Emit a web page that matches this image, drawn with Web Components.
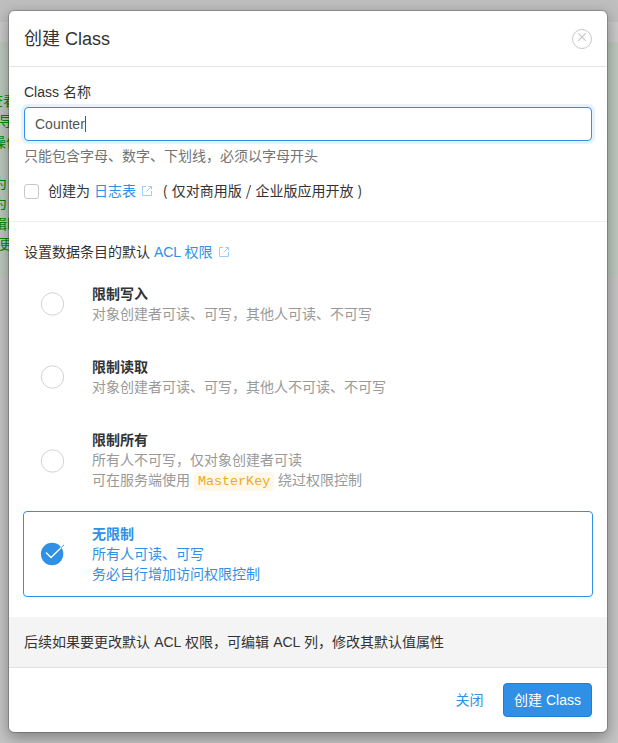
<!DOCTYPE html>
<html lang="zh-CN">
<head>
<meta charset="utf-8">
<title>创建 Class</title>
<style>
html,body{margin:0;height:100%;overflow:hidden}
body{font:14px/20px "Liberation Sans","Noto Sans CJK SC",sans-serif;color:#333;background:#c8c8c8}
</style>
</head>
<body>
<app-root></app-root>
<script>
function define(name, html, init) {
  const t = document.createElement('template');
  t.innerHTML = html;
  customElements.define(name, class extends HTMLElement {
    constructor() {
      super();
      this.attachShadow({ mode: 'open' }).append(t.content.cloneNode(true));
      if (init) init(this);
    }
  });
}

define('page-backdrop', `<style>
:host{display:flex;flex-direction:column;height:743px;width:618px;overflow:hidden;background:#c6c6c6}
.bar{height:22px;background:#bfbfbf}
.sub{height:20px;background:#cbcbcb}
.doc{height:234px;background:#bfc9bf;color:#008a00;line-height:20.5px;white-space:nowrap;padding-top:48.5px;box-sizing:border-box}
.doc div{height:20.5px}
.doc span{display:block}
</style>
<div class="bar"></div><div class="sub"></div>
<div class="doc"><div><span style="margin-left:-11px">查看</span></div><div><span style="margin-left:-1px">导</span></div><div><span style="margin-left:-8px">操作</span></div><div></div><div><span style="margin-left:-7px">为</span></div><div><span style="margin-left:-7px">为</span></div><div><span style="margin-left:-7px">辑时</span></div><div><span style="margin-left:-1px">更</span></div></div>`);

define('modal-dialog', `<style>
:host{position:relative;display:flex;flex-direction:column;box-sizing:border-box;width:600px;height:723px;background:#fff;background-clip:padding-box;border:1px solid rgba(0,0,0,.2);border-radius:6px;box-shadow:0 5px 15px rgba(0,0,0,.35);overflow:hidden}
header{display:flex;align-items:center;justify-content:space-between;height:55px;padding:0 15px;border-bottom:1px solid #e5e5e5;font-size:18px}
footer{margin-top:auto;display:flex;justify-content:flex-end;align-items:center;height:64px;padding:0 15px;border-top:1px solid #e2e2e2}
</style><header><slot name="title"></slot><close-button></close-button></header><slot></slot><footer><slot name="actions"></slot></footer>`);

define('close-button', `<style>:host{display:block;width:20px;height:20px}svg{display:block}</style>
<svg width="20" height="20" fill="none" stroke="#c8c8c8"><circle cx="10" cy="10" r="9.5"/><path d="M6.2 4.2l7.6 7.6M13.8 4.2l-7.6 7.6" stroke-width="1.2"/></svg>`);

define('text-field', `<style>
:host{display:block}
label{display:block;height:20px;margin-bottom:5px}
.box{box-sizing:border-box;height:34px;border:1px solid #2f90e6;border-radius:4px;box-shadow:0 0 0 3px #e6f2fc;padding:6px 10px;display:flex;align-items:center;color:#555}
.caret{width:1px;height:16px;background:#555}
.help{color:#737373;margin-top:5px}
</style><label><slot name="label"></slot></label><div class="box"><slot></slot><i class="caret"></i></div><div class="help"><slot name="help"></slot></div>`);

define('doc-link', `<style>
:host{color:#2f90e6}
svg{margin-left:5px;vertical-align:-1px}
</style><slot></slot><svg width="12" height="12" fill="none" stroke="#9dccf5"><path d="M5 1.5H1.5V10.5H10.5V6M7.5 1.5H10.5V4.5M10.5 1.5L5.5 6.5"/></svg>`);

define('check-row', `<style>
:host{display:flex;align-items:center;height:20px}
.b{box-sizing:border-box;width:15px;height:15px;border:1px solid #c8c8c8;border-radius:3px;margin-right:9px}
</style><span class="b"></span><span><slot></slot></span>`);

define('code-tag', `<style>
:host{display:inline-block;font:13.4px/19px "Liberation Mono",monospace;color:#f5a623;background:#fff8e8;border-radius:4px;padding:0 4px}
</style><slot></slot>`);

define('acl-option', `<style>
:host{display:flex;align-items:center;box-sizing:border-box;border:1px solid transparent;border-radius:4px;padding:12px 16px;height:66px;color:#999}
:host([size=tall]){height:87px}
:host([selected]){height:86px;border-color:#2f90e6;color:#2f90e6}
svg{flex:none;margin-right:27px}
b{display:block;color:#333}
:host([selected]) b{color:inherit}
.on{display:none}
:host([selected]) .on{display:inline}
:host([selected]) .off{display:none}
</style><svg width="25" height="24"><circle class="off" cx="12.5" cy="12" r="11.2" fill="none" stroke="#d2d2d2"/><g class="on"><circle cx="12.1" cy="12" r="11.2" fill="#2f90e6"/><path d="M6 10.5L11 15.5L23.6 3.2" fill="none" stroke="#fff" stroke-width="1.3"/><path d="M21.2 5.5L24 2.8" stroke="#2f90e6"/></g></svg>
<div><b><slot name="name"></slot></b><slot></slot></div>`);

define('ui-button', `<style>
:host{box-sizing:border-box;display:block;height:34px;padding:6px 10px;border:1px solid transparent;border-radius:4px;color:#2f90e6}
:host([primary]){background:#2f90e6;border-color:#1b80da;color:#fff;margin-left:8.5px}
</style><slot></slot>`);

define('app-root', `<style>
:host{display:grid;width:618px;height:743px}
page-backdrop,modal-dialog{grid-area:1/1}
modal-dialog{margin:10px 0 0 8px}
.form{padding:15px 15px 20px;border-bottom:1px solid #eee}
check-row{margin-top:15px}
.acl{padding:20px 14px 20px}
.lead{padding-left:1px;margin-bottom:9px}
.list{display:flex;flex-direction:column;gap:7px}
.note{background:#f4f4f4;padding:15px;height:20px;word-spacing:.25px}
.paren{font-family:"Noto Sans CJK SC",sans-serif;line-height:0;margin-left:6px;word-spacing:1px}
</style>
<page-backdrop></page-backdrop>
<modal-dialog>
<span slot="title">创建 Class</span>
<div class="form">
<text-field><span slot="label">Class 名称</span>Counter<span slot="help">只能包含字母、数字、下划线，必须以字母开头</span></text-field>
<check-row>创建为 <doc-link>日志表</doc-link> <span class="paren">( 仅对商用版 / 企业版应用开放 )</span></check-row>
</div>
<div class="acl"><div class="lead">设置数据条目的默认 <doc-link>ACL 权限</doc-link></div>
<div class="list">
<acl-option><span slot="name">限制写入</span>对象创建者可读、可写，其他人可读、不可写</acl-option>
<acl-option><span slot="name">限制读取</span>对象创建者可读、可写，其他人不可读、不可写</acl-option>
<acl-option size="tall"><span slot="name">限制所有</span>所有人不可写，仅对象创建者可读<br>可在服务端使用 <code-tag>MasterKey</code-tag> 绕过权限控制</acl-option>
<acl-option selected><span slot="name">无限制</span>所有人可读、可写<br>务必自行增加访问权限控制</acl-option>
</div></div>
<div class="note">后续如果要更改默认 ACL 权限，可编辑 ACL 列，修改其默认值属性</div>
<ui-button slot="actions">关闭</ui-button><ui-button slot="actions" primary>创建 Class</ui-button>
</modal-dialog>`);
</script>
</body>
</html>
